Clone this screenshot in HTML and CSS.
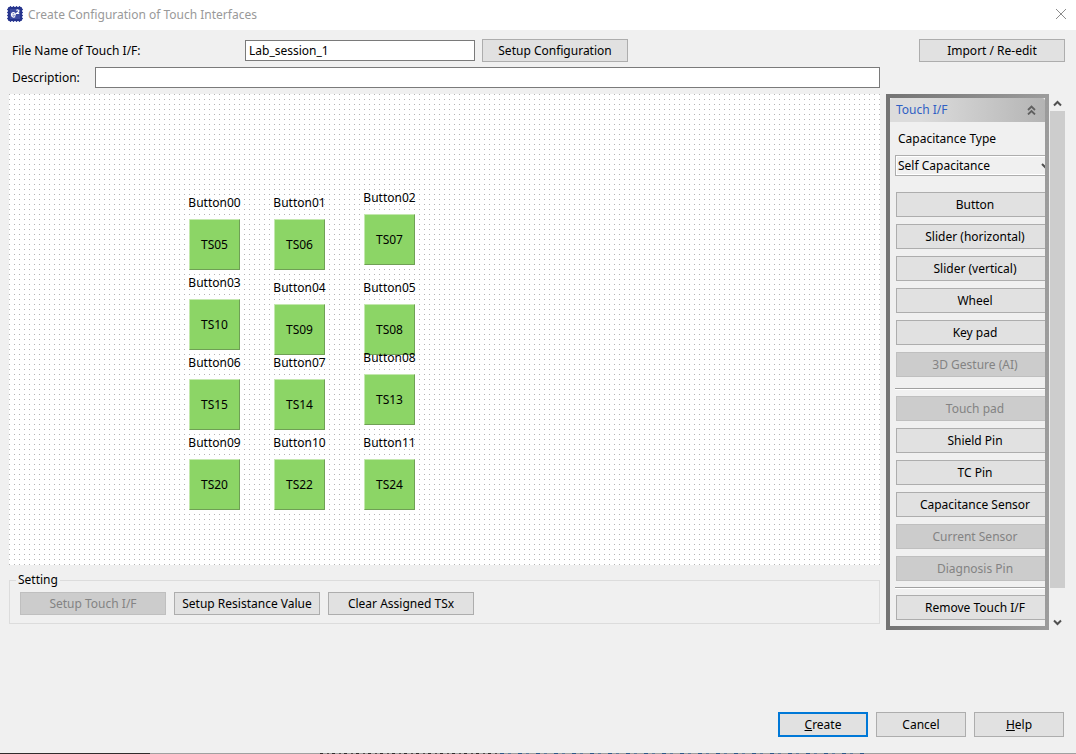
FILE: index.html
```html
<!DOCTYPE html>
<html lang="en">
<head>
<meta charset="utf-8">
<title>Create Configuration of Touch Interfaces</title>
<link rel="stylesheet" href="styles.css">
</head>
<body>
<div class="window">
  <header class="titlebar">
    <svg class="app-icon" viewBox="0 0 16 16" aria-hidden="true">
      <path d="M3.500 0v16M6.500 0v16M9.500 0v16M12.500 0v16M0 3.500h16M0 6.500h16M0 9.500h16M0 12.500h16" stroke="#3c4aa0" stroke-width="1.400"/>
      <rect x="1" y="1" width="14" height="14" rx="1" fill="#26348c"/>
      <rect x="3" y="3" width="10" height="10" fill="#3c4aa0"/>
      <path d="M4.300 8.800h4c0-3-3.800-3-3.800 0 0 2.600 2.500 2.700 3.700 1.700M9.500 4.600c.5-1 2.600-.8 2.300.6-.2.900-1.500 1.300-2.200 2.200h2.600" fill="none" stroke="#fff" stroke-width="1.200"/>
    </svg>
    <h1 class="title">Create Configuration of Touch Interfaces</h1>
    <button class="close" aria-label="Close"><svg viewBox="0 0 12 12" width="12" height="12"><path d="M1 1l10 10M11 1L1 11" stroke="#8c8c8c" fill="none"/></svg></button>
  </header>

  <main class="content">
    <div class="row file-row">
      <label class="file-label" for="file">File Name of Touch I/F:</label>
      <input class="text file-input" id="file" type="text" value="Lab_session_1">
      <button class="btn">Setup Configuration</button>
      <button class="btn push">Import / Re-edit</button>
    </div>

    <div class="columns">
      <div class="left">
        <div class="row desc-row">
          <label class="desc-label" for="desc">Description:</label>
          <input class="text desc-input" id="desc" type="text">
        </div>
        <div class="canvas">
          <div class="node c1 r1"><span>Button00</span><button class="pad">TS05</button></div>
          <div class="node c2 r1"><span>Button01</span><button class="pad">TS06</button></div>
          <div class="node c3 r1-up"><span>Button02</span><button class="pad">TS07</button></div>
          <div class="node c1 r2-up"><span>Button03</span><button class="pad">TS10</button></div>
          <div class="node c2 r2"><span>Button04</span><button class="pad">TS09</button></div>
          <div class="node c3 r2"><span>Button05</span><button class="pad">TS08</button></div>
          <div class="node c1 r3"><span>Button06</span><button class="pad">TS15</button></div>
          <div class="node c2 r3"><span>Button07</span><button class="pad">TS14</button></div>
          <div class="node c3 r3-up"><span>Button08</span><button class="pad">TS13</button></div>
          <div class="node c1 r4"><span>Button09</span><button class="pad">TS20</button></div>
          <div class="node c2 r4"><span>Button10</span><button class="pad">TS22</button></div>
          <div class="node c3 r4"><span>Button11</span><button class="pad">TS24</button></div>
        </div>
        <fieldset class="setting">
          <legend>Setting</legend>
          <div class="setting-row">
            <button class="btn" disabled>Setup Touch I/F</button>
            <button class="btn">Setup Resistance Value</button>
            <button class="btn">Clear Assigned TSx</button>
          </div>
        </fieldset>
      </div>

      <div class="side">
        <aside class="palette">
          <div class="palette-inner">
            <button class="palette-head"><span>Touch I/F</span>
              <svg viewBox="0 0 9 10" width="9" height="10"><path d="M1 5l3.500-3.500L8 5M1 9.500L4.500 6 8 9.500" fill="none" stroke="#606060" stroke-width="1.800"/></svg>
            </button>
            <div class="palette-body">
              <label class="type-label" for="type">Capacitance Type</label>
              <div class="select-wrap">
                <select id="type"><option>Self Capacitance</option></select>
                <svg viewBox="0 0 9 6" width="9" height="6"><path d="M1 1l3.500 3.500L8 1" fill="none" stroke="#505050" stroke-width="2"/></svg>
              </div>
              <div class="tools">
                <button class="btn tool">Button</button>
                <button class="btn tool">Slider (horizontal)</button>
                <button class="btn tool">Slider (vertical)</button>
                <button class="btn tool">Wheel</button>
                <button class="btn tool">Key pad</button>
                <button class="btn tool" disabled>3D Gesture (AI)</button>
              </div>
              <hr class="wide">
              <div class="tools">
                <button class="btn tool" disabled>Touch pad</button>
                <button class="btn tool">Shield Pin</button>
                <button class="btn tool">TC Pin</button>
                <button class="btn tool">Capacitance Sensor</button>
                <button class="btn tool" disabled>Current Sensor</button>
                <button class="btn tool" disabled>Diagnosis Pin</button>
              </div>
              <hr>
              <div class="tools"><button class="btn tool">Remove Touch I/F</button></div>
            </div>
          </div>
        </aside>
        <div class="scrollbar">
          <button class="arrow" aria-label="Scroll up"><svg viewBox="0 0 9 7" width="9" height="7"><path d="M1 5.500L4.500 2 8 5.500" fill="none" stroke="#505050" stroke-width="2"/></svg></button>
          <div class="thumb"></div>
          <button class="arrow down" aria-label="Scroll down"><svg viewBox="0 0 9 7" width="9" height="7"><path d="M1 1.500L4.500 5 8 1.500" fill="none" stroke="#505050" stroke-width="2"/></svg></button>
        </div>
      </div>
    </div>
  </main>

  <footer class="actions">
    <button class="btn action primary"><u>C</u>reate</button>
    <button class="btn action">Cancel</button>
    <button class="btn action"><u>H</u>elp</button>
  </footer>
  <div class="edge"><i class="edge-dark"></i><i class="edge-gap"></i><i class="edge-marks"></i><i class="edge-blue"></i></div>
</div>
</body>
</html>
```

FILE: styles.css
```css
* { box-sizing: border-box; }
body { margin: 0; background: #f0f0f0; }
body, button, input, select { font: 12px/16px "Noto Sans", "Open Sans", sans-serif; color: #000; }
button { padding: 0; }
svg { display: block; }

.window { display: flex; flex-direction: column; min-height: 100vh; }

.titlebar { display: flex; align-items: center; height: 30px; padding: 0 9px 2px 7px; background: #fff; }
.app-icon { width: 16px; height: 16px; }
.title { flex: 1; margin: 0 0 0 5px; padding-top: 1px; font-size: 12px; font-weight: 400; line-height: 16px; color: #999; }
.close { border: 0; background: none; }

.content { padding: 9px 11px 0 9px; }
.row { display: flex; align-items: center; }
.file-row { padding-left: 3px; }
.file-label { width: 233px; }
.text { height: 21px; padding: 0 3px; border: 1px solid #7a7a7a; background: #fff; }
.file-input { width: 230px; margin-right: 7px; }
.btn { width: 146px; height: 23px; border: 1px solid #adadad; background: #e1e1e1; white-space: nowrap; }
.btn:disabled { border-color: #bfbfbf; background: #ccc; color: #838383; }
.push { margin-left: auto; }

.columns { display: flex; align-items: flex-start; gap: 6px; }
.left { flex: 1; min-width: 0; }
.desc-row { padding: 5px 0 6px 3px; }
.desc-label { width: 83px; }
.desc-input { flex: 1; min-width: 0; }

.canvas {
  position: relative; height: 471px; overflow: hidden;
  background-image: linear-gradient(90deg, transparent 1px, #fff 1px), linear-gradient(#b4b4b4 1px, #fff 1px);
  background-size: 5px 5px;
}
.node { position: absolute; display: flex; flex-direction: column; align-items: center; gap: 8px; width: 51px; }
.c1 { left: 180px; }
.c2 { left: 265px; }
.c3 { left: 355px; }
.r1-up { top: 96px; }
.r1 { top: 101px; }
.r2-up { top: 181px; }
.r2 { top: 186px; }
.r3-up { top: 256px; }
.r3 { top: 261px; }
.r4 { top: 341px; }
.pad { width: 51px; height: 51px; border: 1px solid; border-color: #c4e8ae #6f9f55 #6f9f55 #c4e8ae; background: #8cd566; }

.setting { min-width: 0; margin: 7px 0 0; padding: 0 10px 8px; border: 1px solid #dcdcdc; }
.setting legend { margin-left: -4px; padding: 0 2px; }
.setting-row { display: flex; gap: 8px; padding-top: 4px; }

.side { display: flex; padding-top: 32px; gap: 1px; }
.palette { width: 163px; padding: 4px; background: linear-gradient(90deg, #737373, #9c9c9c); }
.palette-inner { overflow: hidden; height: 528px; background: #f0f0f0; }
.palette-head {
  display: flex; align-items: center; justify-content: space-between; width: 100%; height: 24px;
  padding: 0 9px 0 6px; border: 0; border-radius: 3px 3px 0 0;
  background: linear-gradient(90deg, #dcdcdc 20%, #b4b4b4); color: #2f5fc4;
}
.palette-body { width: 164px; padding: 9px 0 0 5px; }
.type-label { display: block; padding-left: 3px; }
.select-wrap { position: relative; width: 158px; margin: 8px 0 16px; }
.select-wrap select { appearance: none; display: block; width: 100%; height: 21px; padding: 0 2px; border: 1px solid #adadad; border-radius: 0; background: #f0f0f0; outline: 1px solid #fff; outline-offset: -2px; }
.select-wrap svg { position: absolute; top: 8px; right: 3px; }
.tools { display: flex; flex-direction: column; gap: 7px; padding-left: 1px; }
.tool { width: 158px; height: 25px; }
hr { height: 2px; margin: 6px 0; border: 0; border-top: 1px solid #a0a0a0; background: #fff; }
hr.wide { margin-top: 11px; }

.scrollbar { display: flex; flex-direction: column; width: 15px; height: 536px; }
.arrow { display: flex; justify-content: center; height: 17px; padding-top: 6px; border: 0; background: none; }
.thumb { height: 477px; background: #cdcdcd; }
.down { margin-top: auto; }

.actions { display: flex; justify-content: flex-end; gap: 8px; margin-top: auto; padding: 0 12px 16px; }
.action { width: 90px; height: 25px; }
.primary { border: 2px solid #0078d7; }

.edge { display: flex; height: 1px; background: #a0a0a0; }
.edge-dark { width: 150px; background: #302c2c; }
.edge-gap { width: 170px; }
.edge-marks { width: 180px; background: repeating-linear-gradient(90deg, #302c2c 0 3px, #a0a0a0 3px 7px, #504848 7px 9px, #a0a0a0 9px 12px); }
.edge-blue { width: 366px; background: repeating-linear-gradient(90deg, #2c5888 0 4px, #a0a0a0 4px 8px, #5c7898 8px 11px, #a0a0a0 11px 18px); }
```
